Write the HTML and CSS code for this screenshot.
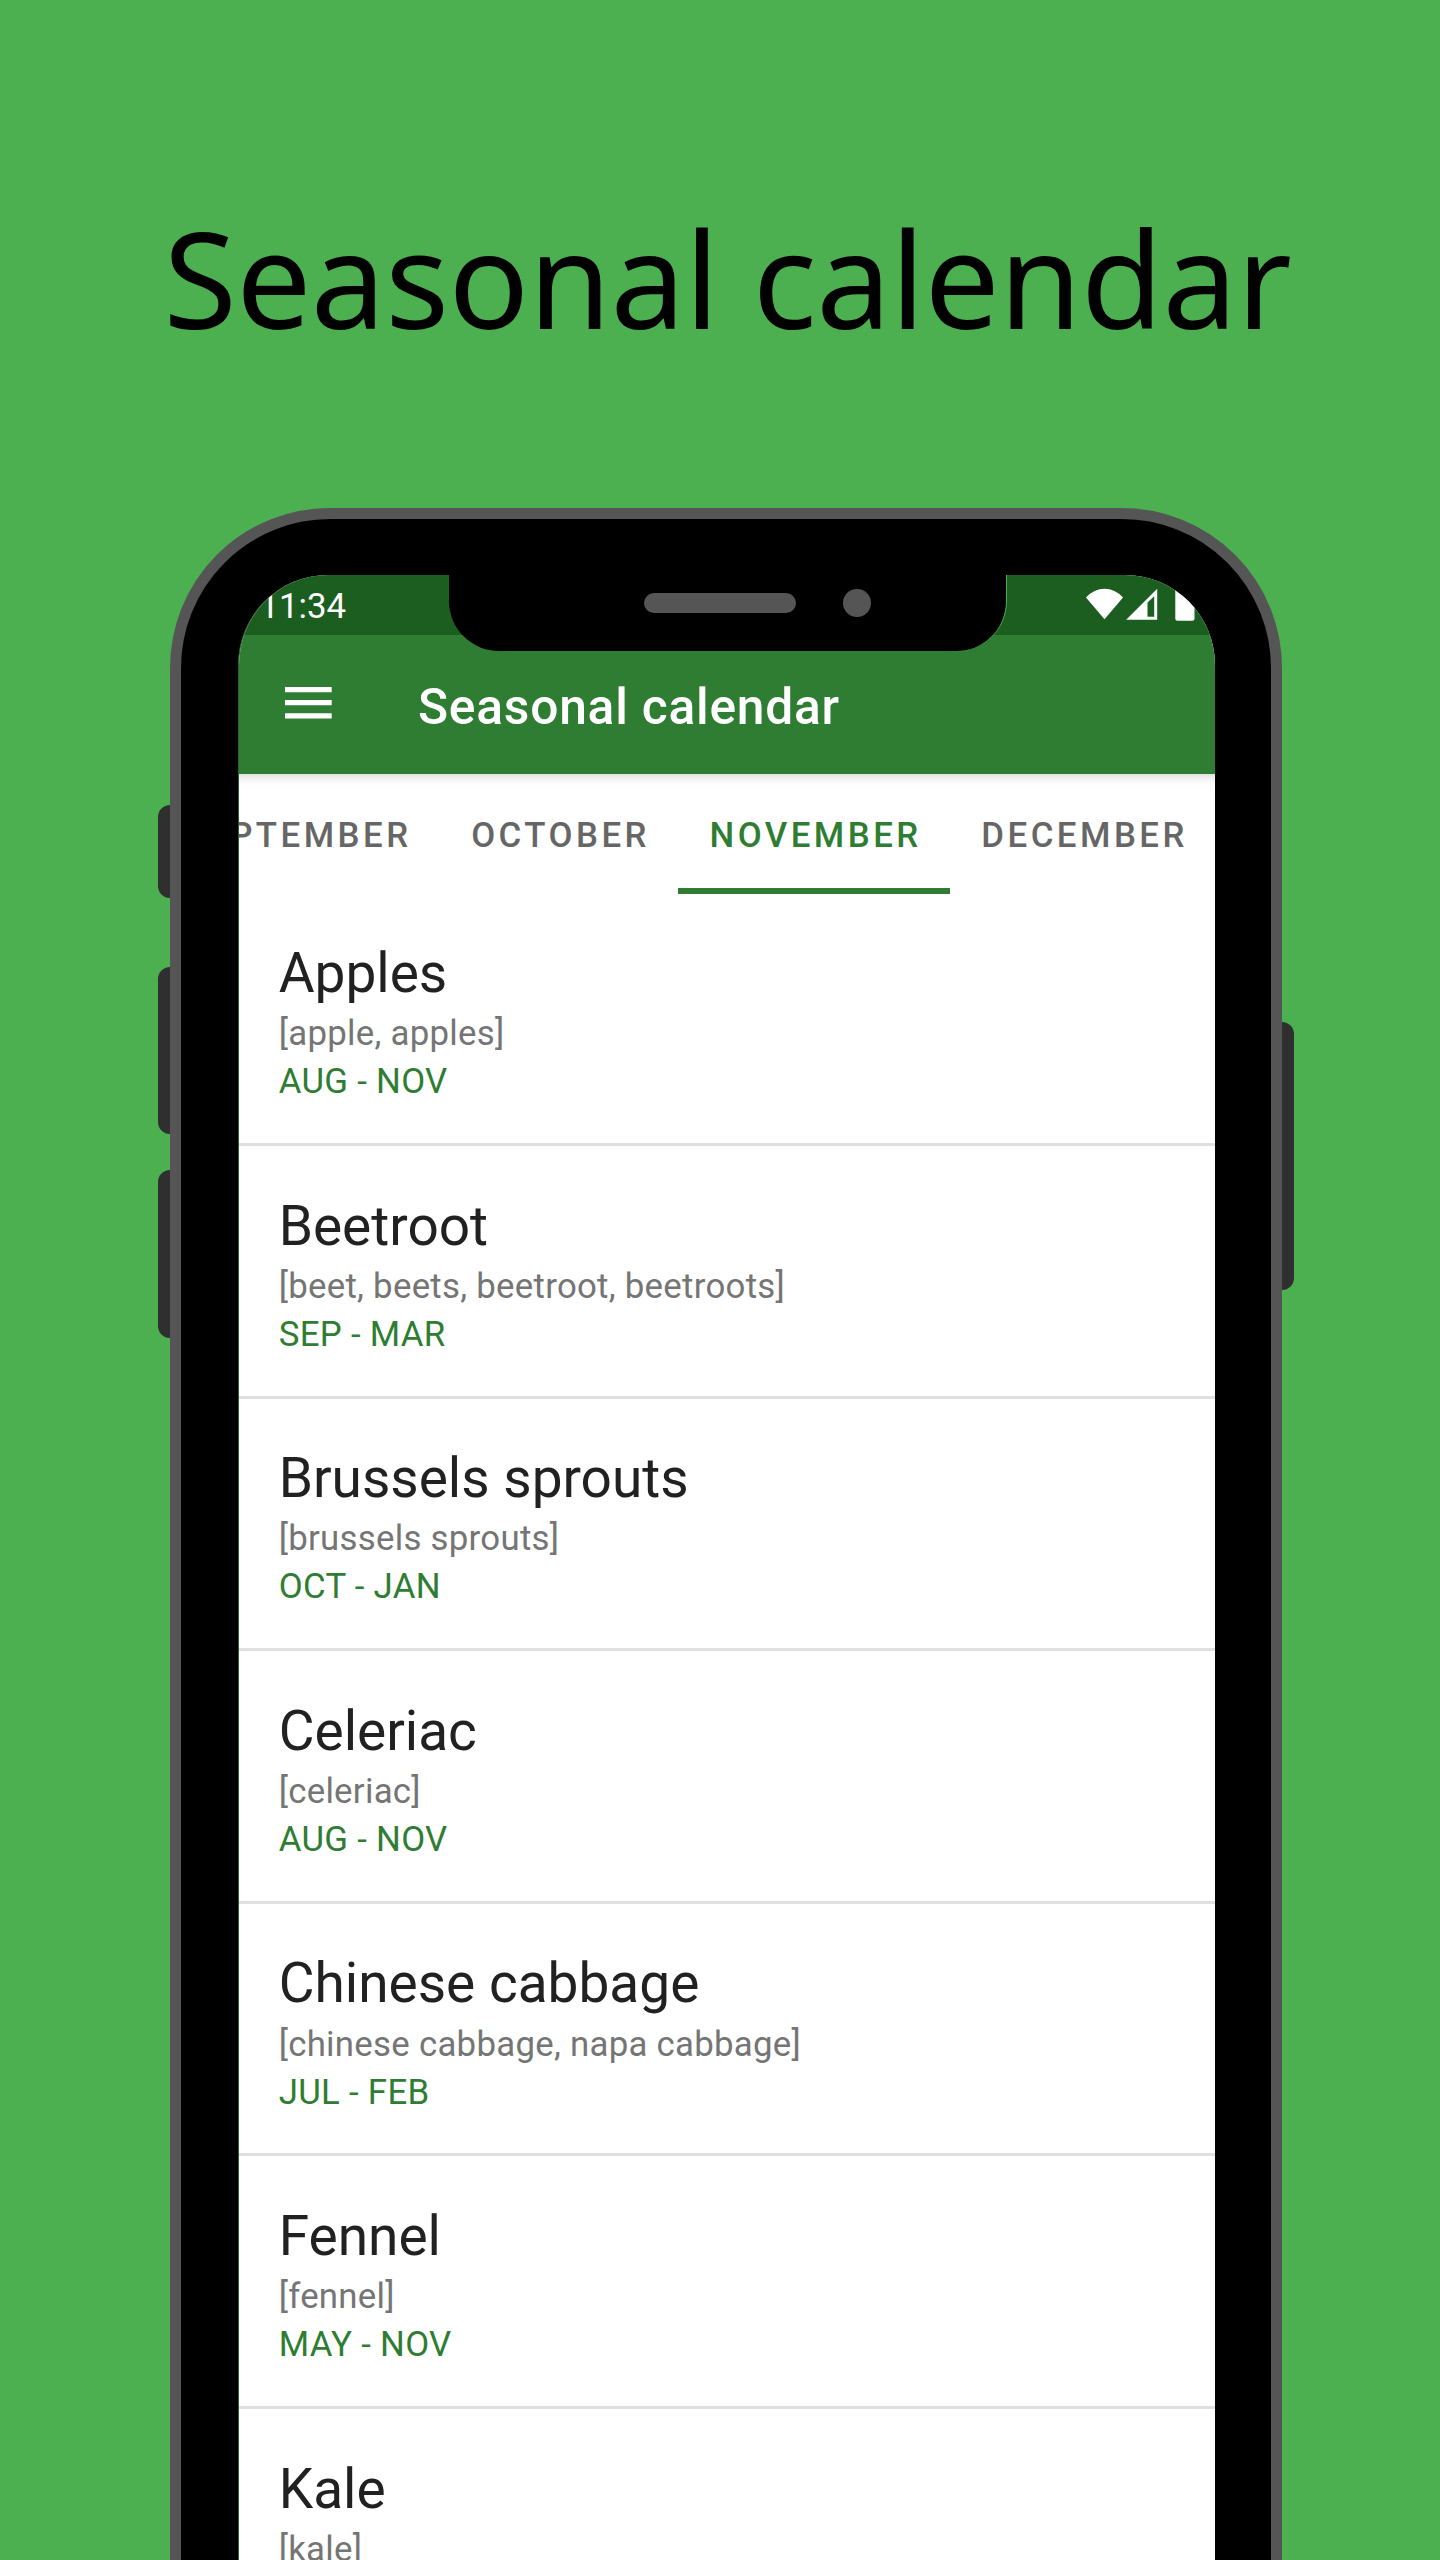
FILE: index.html
```html
<!DOCTYPE html>
<html lang="en">
<head>
<meta charset="utf-8">
<title>Seasonal calendar</title>
<link rel="stylesheet" href="styles.css">
</head>
<body>
<main class="poster">
  <h1 class="headline">Seasonal calendar</h1>
  <div class="phone">
    <span class="key key-mute"></span>
    <span class="key key-up"></span>
    <span class="key key-down"></span>
    <span class="key key-power"></span>
    <div class="screen">
      <div class="notch"><span class="speaker"></span><span class="camera"></span></div>
      <div class="status-bar">
        <span class="time">11:34</span>
        <svg class="status-icons" width="114" height="34" viewBox="0 0 114 34" fill="#fff">
          <path d="M0 10.4Q8 1.7 18.5 1.7T37 10.4L18.5 32.3Z"/>
          <path fill-rule="evenodd" d="M40.2 32.7L71.2 1.7V32.7ZM61.5 15.5V29.7H68.2V9.2Z"/>
          <path d="M89.3 3H108.5V31.2Q108.5 33.7 106 33.7H91.8Q89.3 33.7 89.3 31.2Z"/>
        </svg>
      </div>
      <header class="app-bar">
        <svg class="menu-icon" width="47" height="33" viewBox="0 0 47 33" fill="#fff">
          <path d="M0 1H46.7V6.3H0ZM0 14H46.7V19.3H0ZM0 27.2H46.7V32.5H0Z"/>
        </svg>
        <h2 class="app-title">Seasonal calendar</h2>
      </header>
      <nav class="tabs">
        <span class="tab">September</span>
        <span class="tab">October</span>
        <span class="tab active">November</span>
        <span class="tab">December</span>
      </nav>
      <ul class="list">
        <li class="item"><h3 class="name">Apples</h3><p class="terms">[apple, apples]</p><p class="season">AUG - NOV</p></li>
        <li class="item"><h3 class="name">Beetroot</h3><p class="terms">[beet, beets, beetroot, beetroots]</p><p class="season">SEP - MAR</p></li>
        <li class="item"><h3 class="name">Brussels sprouts</h3><p class="terms">[brussels sprouts]</p><p class="season">OCT - JAN</p></li>
        <li class="item"><h3 class="name">Celeriac</h3><p class="terms">[celeriac]</p><p class="season">AUG - NOV</p></li>
        <li class="item"><h3 class="name">Chinese cabbage</h3><p class="terms">[chinese cabbage, napa cabbage]</p><p class="season">JUL - FEB</p></li>
        <li class="item"><h3 class="name">Fennel</h3><p class="terms">[fennel]</p><p class="season">MAY - NOV</p></li>
        <li class="item"><h3 class="name">Kale</h3><p class="terms">[kale]</p></li>
      </ul>
    </div>
  </div>
</main>
</body>
</html>
```
FILE: styles.css
```css
* { box-sizing: border-box; }
body, h1, h2, h3, p, ul { margin: 0; padding: 0; }
h1, h2, h3 { font-weight: 400; }

.poster {
  width: 1440px;
  height: 2560px;
  overflow: hidden;
  background: #4caf50;
  font-family: Roboto, "Liberation Sans", sans-serif;
}

.headline {
  height: 508px;
  padding: 188px 0 0 163.5px;
  font: 133.3px/180px "Noto Sans", sans-serif;
  letter-spacing: -.5px;
  color: #000;
  white-space: nowrap;
}

/* Device frame */
.phone {
  position: relative;
  width: 1112px;
  height: 2300px;
  margin-left: 170px;
  padding: 56px 56px 0 57px;
  border: 11px solid #555;
  border-radius: 160px;
  background: #000;
}
.key { position: absolute; width: 12px; left: -23px; background: #2f2f2f; border-radius: 12px 0 0 12px; }
.key-mute { top: 286px; height: 93px; }
.key-up { top: 448px; height: 167px; }
.key-down { top: 651px; height: 168px; }
.key-power { left: auto; right: -23px; top: 503px; height: 268px; border-radius: 0 12px 12px 0; }

.screen {
  position: relative;
  width: 977px;
  height: 2200px;
  overflow: hidden;
  border-left: 1px solid #2c5e2e;
  border-top-left-radius: 90px;
  border-top-right-radius: 90px;
  background: #fff;
}

.notch {
  position: absolute;
  top: 0;
  left: 210px;
  width: 558px;
  height: 76px;
  border-right: 1px solid #4caf50;
  border-radius: 0 0 50px 50px;
  background: #000;
}
.speaker { position: absolute; left: 195px; top: 18px; width: 152px; height: 20px; border-radius: 10px; background: #555; }
.camera { position: absolute; left: 394px; top: 14px; width: 28px; height: 28px; border-radius: 50%; background: #555; }

/* App chrome */
.status-bar {
  display: flex;
  justify-content: space-between;
  height: 60px;
  padding: 12px 15px 0 20.5px;
  background: #1b5e20;
  color: #fff;
}
.time { font-size: 34.8px; line-height: 38px; }
.app-bar {
  display: flex;
  height: 139px;
  padding: 51px 0 0 46px;
  background: #2e7d32;
  color: #fff;
}
.app-title {
  margin: -8px 0 0 86px;
  font-size: 49.7px;
  line-height: 58px;
  font-weight: 500;
  letter-spacing: .78px;
}

.tabs {
  display: flex;
  justify-content: flex-end;
  height: 120px;
  margin-right: -1.4px;
  background: linear-gradient(#e2e2e2, #f4f4f4 5px, #fcfcfc 10px, #fff 15px);
}
.tab {
  padding: 40px 28.5px 0 31.1px;
  font-size: 34.8px;
  line-height: 42px;
  font-weight: 500;
  letter-spacing: 3.48px;
  text-transform: uppercase;
  color: #666;
}
.tab.active { color: #2e7d32; border-bottom: 6px solid #2e7d32; }

.list { margin-top: -.6px; list-style: none; }
.item {
  height: 252.6px;
  padding: 46.7px 0 0 39.7px;
  border-bottom: 3px solid #e0e0e0;
}
.name { font-size: 55px; line-height: 66px; color: #212121; }
.terms { margin-top: 3.2px; font-size: 34.8px; line-height: 48px; letter-spacing: .27px; color: #757575; }
.season { font-size: 34.8px; line-height: 48px; letter-spacing: .3px; color: #2e7d32; }
```
